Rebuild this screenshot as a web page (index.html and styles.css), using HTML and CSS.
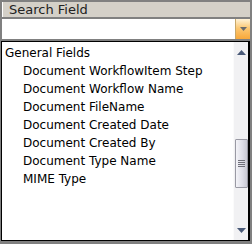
FILE: index.html
```html
<!DOCTYPE html>
<html lang="en">
<head>
    <meta charset="UTF-8">
    <title>Search Field</title>
    <link rel="stylesheet" href="styles.css">
</head>
<body>
    <div class="panel">
        <div class="panel-header">Search Field</div>

        <div class="combo">
            <input class="combo-input" type="text">
            <div class="combo-button">
                <svg width="9" height="5" viewBox="0 0 9 5"><path d="M1 0h7L4.5 4z" fill="#6b6b6b"/></svg>
            </div>
        </div>

        <div class="field-list">
            <ul class="items">
                <li class="group">General Fields</li>
                <li>Document WorkflowItem Step</li>
                <li>Document Workflow Name</li>
                <li>Document FileName</li>
                <li>Document Created Date</li>
                <li>Document Created By</li>
                <li>Document Type Name</li>
                <li>MIME Type</li>
            </ul>
            <div class="scrollbar">
                <div class="arrow">
                    <svg width="9" height="5" viewBox="0 0 9 5"><path d="M4.5 0L9 5H0z" fill="#4a5a78"/></svg>
                </div>
                <div class="track">
                    <div class="thumb">
                        <span></span><span></span><span></span><span></span>
                    </div>
                </div>
                <div class="arrow">
                    <svg width="9" height="5" viewBox="0 0 9 5"><path d="M0 0h9L4.5 5z" fill="#4a5a78"/></svg>
                </div>
            </div>
        </div>
    </div>
</body>
</html>
```

FILE: styles.css
```css
body {
    margin: 0;
    padding: 0;
    background-color: #808080;
    font-family: "DejaVu Sans", Verdana, sans-serif;
    font-size: 11px;
}

.panel {
    width: 252px;
    height: 244px;
    padding: 2px 2px 3px 1px;
    box-sizing: border-box;
    display: flex;
    flex-direction: column;
}

.panel-header {
    height: 15px;
    margin-left: 1px;
    padding-left: 6px;
    background-color: #d4d0c8;
    border-left: 1px solid #ffffff;
    color: #222;
    font-size: 13px;
    line-height: 15px;
}

.combo {
    display: flex;
    height: 20px;
    margin: 2px 0 2px 1px;
    background-color: #ffffff;
}

.combo-input {
    flex: 1;
    border: none;
    outline: none;
    padding: 0 3px;
    font: inherit;
}

.combo-button {
    width: 14px;
    border-left: 1px solid #c8a86a;
    background: linear-gradient(#fff3d8, #fcc873 45%, #f9a83a);
    display: flex;
    align-items: center;
    justify-content: center;
}

.field-list {
    flex: 1;
    display: flex;
    background-color: #ffffff;
    border: 1px solid #000000;
    border-right-width: 2px;
}

.items {
    flex: 1;
    list-style: none;
    margin: 0;
    padding: 2px 0 0 3px;
    color: #000;
    font-size: 12px;
}

.items li {
    height: 18px;
    line-height: 18px;
    padding-left: 18px;
    white-space: nowrap;
}

.items li.group {
    padding-left: 0;
}

.scrollbar {
    width: 14px;
    display: flex;
    flex-direction: column;
    background-color: #f1f1f3;
    border-left: 1px solid #fbfbfb;
}

.arrow {
    height: 20px;
    display: flex;
    align-items: center;
    justify-content: center;
}

.track {
    flex: 1;
    padding-top: 77px;
}

.thumb {
    height: 49px;
    margin-left: 1px;
    border: 1px solid #9a9aa4;
    border-radius: 1px;
    background: linear-gradient(to right, #f4f4f8, #dcdce6 60%, #c8c8d2);
    display: flex;
    flex-direction: column;
    align-items: center;
    justify-content: center;
    gap: 1px;
    box-sizing: border-box;
}

.thumb span {
    width: 7px;
    height: 1px;
    background-color: #70707a;
}
```
